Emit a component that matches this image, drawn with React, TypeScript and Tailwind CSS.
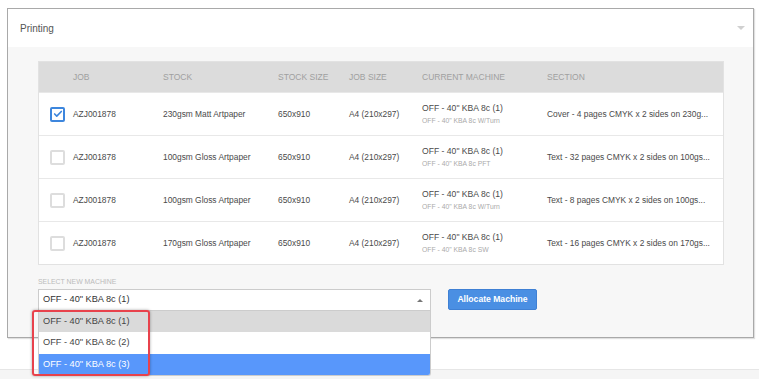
import { Check } from "lucide-react";

const rows = [
  { checked: true, stock: "230gsm Matt Artpaper", sub: "OFF - 40\" KBA 8c W/Turn", section: "Cover - 4 pages CMYK x 2 sides on 230g..." },
  { checked: false, stock: "100gsm Gloss Artpaper", sub: "OFF - 40\" KBA 8c PFT", section: "Text - 32 pages CMYK x 2 sides on 100gs..." },
  { checked: false, stock: "100gsm Gloss Artpaper", sub: "OFF - 40\" KBA 8c W/Turn", section: "Text - 8 pages CMYK x 2 sides on 100gs..." },
  { checked: false, stock: "170gsm Gloss Artpaper", sub: "OFF - 40\" KBA 8c SW", section: "Text - 16 pages CMYK x 2 sides on 170gs..." },
];

const cols = "grid grid-cols-[34px_90px_115px_71px_73px_125px_1fr] items-center";

export default function App() {
  return (
    <div className="min-h-screen bg-white font-['Liberation_Sans',Arial,sans-serif]">
      <div className="pt-2 pl-[7px]">
        <div className="w-[747px] border border-[#a9a9a9] shadow-[1px_1px_1px_rgba(0,0,0,0.12)]">
          {/* header */}
          <div className="h-[38px] bg-white flex items-center justify-between pl-[12px] pr-[8px]">
            <span className="text-[10px] text-[#555]">Printing</span>
            <span className="w-0 h-0 border-l-[4px] border-r-[4px] border-t-[4px] border-l-transparent border-r-transparent border-t-[#d0d0d0]" />
          </div>

          {/* body */}
          <div className="bg-[#f7f7f7] pt-[14px] pb-[26px] pl-[30px]">
            <div className="w-[686px] border border-[#e2e2e2] bg-white">
              <div className={`${cols} h-[30px] bg-[#dcdcdc] text-[8.5px] text-[#a0a0a0]`}>
                <span />
                <span>JOB</span>
                <span>STOCK</span>
                <span>STOCK SIZE</span>
                <span>JOB SIZE</span>
                <span>CURRENT MACHINE</span>
                <span>SECTION</span>
              </div>
              {rows.map((r, i) => (
                <div key={i} className={`${cols} h-[43px] border-t border-[#e8e8e8] text-[8.4px] text-[#4a4a4a]`}>
                  <div className="pl-[11px]">
                    {r.checked ? (
                      <div className="w-[15px] h-[15px] border-2 border-[#3d86dd] rounded-[2px] flex items-center justify-center">
                        <Check size={10} strokeWidth={4} className="text-[#3d86dd]" />
                      </div>
                    ) : (
                      <div className="w-[15px] h-[15px] border-2 border-[#dddddd] rounded-[2px]" />
                    )}
                  </div>
                  <span>AZJ001878</span>
                  <span>{r.stock}</span>
                  <span>650x910</span>
                  <span>A4 (210x297)</span>
                  <div className="flex flex-col">
                    <span className="leading-[12px] text-[8.6px]">OFF - 40" KBA 8c (1)</span>
                    <span className="text-[6.8px] text-[#aaaaaa] leading-[10px] mt-[2px]">{r.sub}</span>
                  </div>
                  <span className="whitespace-nowrap">{r.section}</span>
                </div>
              ))}
            </div>

            <div className="mt-[13px] text-[6.9px] leading-[8px] text-[#bbbbbb]">SELECT NEW MACHINE</div>
            <div className="mt-[3px] flex items-start gap-[17px]">
              <div className="relative w-[393px]">
                <div className="h-[22px] border border-[#cccccc] bg-white flex items-center justify-between pl-[4px] pr-[7px] text-[9.2px] text-[#333]">
                  <span>OFF - 40" KBA 8c (1)</span>
                  <span className="w-0 h-0 border-l-[3px] border-r-[3px] border-b-[3px] border-l-transparent border-r-transparent border-b-[#777]" />
                </div>
                <div className="absolute z-10 left-0 top-full w-full bg-white border-x border-b border-[#cccccc] rounded-b-[3px] text-[9.2px]">
                  <div className="h-[21px] bg-[#dadada] text-[#444] pl-[4px] flex items-center">OFF - 40" KBA 8c (1)</div>
                  <div className="h-[22px] bg-white text-[#444] pl-[4px] flex items-center">OFF - 40" KBA 8c (2)</div>
                  <div className="h-[21px] bg-[#5897fb] text-white pl-[4px] flex items-center rounded-b-[2px]">OFF - 40" KBA 8c (3)</div>
                  <div className="absolute left-[-7px] top-[-1px] w-[118px] h-[66px] border-2 border-[#e8424c] rounded-[3px] shadow-[0_0_3px_rgba(0,0,0,0.35)]" />
                </div>
              </div>
              <button className="h-[21px] w-[89px] rounded-[2px] bg-[#4a8fe3] border border-[#3f80d4] text-white text-[8.6px] font-bold">
                Allocate Machine
              </button>
            </div>
          </div>
        </div>
      </div>
      <div className="mt-[31px] border-t border-[#e6e6e6] bg-[#f5f5f5] h-[11px]" />
    </div>
  );
}
